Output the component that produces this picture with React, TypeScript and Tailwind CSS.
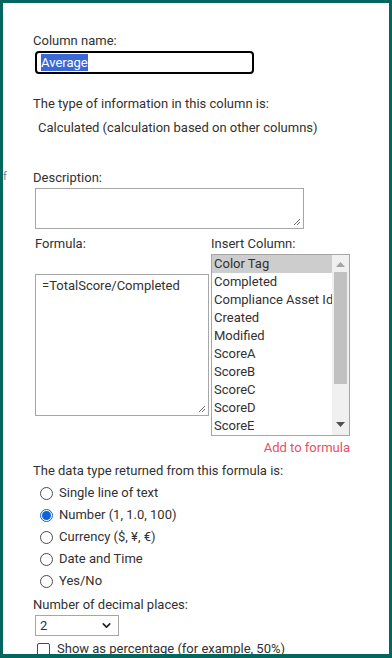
import { ChevronDown } from "lucide-react";

const columns = [
  "Color Tag",
  "Completed",
  "Compliance Asset Id",
  "Created",
  "Modified",
  "ScoreA",
  "ScoreB",
  "ScoreC",
  "ScoreD",
  "ScoreE",
];

const types = [
  { label: "Single line of text", checked: false },
  { label: "Number (1, 1.0, 100)", checked: true },
  { label: "Currency ($, ¥, €)", checked: false },
  { label: "Date and Time", checked: false },
  { label: "Yes/No", checked: false },
];

const Radio = ({ checked }: { checked: boolean }) =>
  checked ? (
    <span className="w-[13px] h-[13px] rounded-full border border-[#0a64d8] flex items-center justify-center">
      <span className="w-[9px] h-[9px] rounded-full bg-[#0a64d8]" />
    </span>
  ) : (
    <span className="w-[13px] h-[13px] rounded-full border border-[#4a4a4a] bg-white" />
  );

const Resize = () => (
  <svg className="absolute right-[2px] bottom-[2px]" width="8" height="8" viewBox="0 0 8 8">
    <path d="M7 1 L1 7 M7 4 L4 7" stroke="#6b6b6b" strokeWidth="1" />
  </svg>
);

export default function App() {
  return (
    <div
      className="w-[392px] h-[658px] overflow-hidden bg-white border-[#03665f] border-t-[3px] border-l-[3px] border-r-[3px] border-b-[4px] text-[13px] text-[#323130] relative"
      style={{ fontFamily: 'Roboto, "Noto Sans", sans-serif' }}
    >
      <span className="absolute left-[0px] top-[166px] text-[11px] text-[#6a7fa0]">f</span>
      <div className="pl-[30px] pt-[29px]">
        <div className="leading-[18px] h-[18px]">Column name:</div>
        <div className="mt-[1px] ml-[2px] w-[219px] h-[23px] border-2 border-black rounded-[4px] flex items-center px-[4px]">
          <span className="bg-[#3b68d7] text-white leading-[17px]">Average</span>
        </div>
        <div className="mt-[21px] leading-[18px] h-[18px]">The type of information in this column is:</div>
        <div className="mt-[6px] ml-[5px] leading-[18px] h-[18px]">Calculated (calculation based on other columns)</div>
        <div className="mt-[32px] leading-[18px] h-[18px]">Description:</div>
        <div className="mt-[1px] ml-[2px] w-[269px] h-[41px] border border-[#a6a6a6] relative">
          <Resize />
        </div>
        <div className="flex mt-[6px] ml-[2px]">
          <div className="w-[176px]">
            <div className="leading-[18px] h-[18px]">Formula:</div>
            <div className="mt-[21px] w-[174px] h-[142px] border border-[#a6a6a6] relative px-[6px] py-[2px] leading-[18px]">
              =TotalScore/Completed
              <Resize />
            </div>
          </div>
          <div className="w-[139px]">
            <div className="leading-[18px] h-[18px]">Insert Column:</div>
            <div className="mt-[1px] w-[139px] h-[182px] border border-[#a6a6a6] flex">
              <div className="flex-1 min-w-0 overflow-hidden">
                {columns.map((c, i) => (
                  <div
                    key={c}
                    className={`h-[18px] leading-[18px] pl-[2px] whitespace-nowrap ${i === 0 ? "bg-[#cdcdcd]" : ""}`}
                  >
                    {c}
                  </div>
                ))}
              </div>
              <div className="w-[17px] bg-[#f0f0f0] flex flex-col items-center">
                <svg className="mt-[7px]" width="9" height="5" viewBox="0 0 9 5">
                  <path d="M0 5 L4.5 0 L9 5 Z" fill="#a3a3a3" />
                </svg>
                <div className="mt-[5px] w-[13px] h-[112px] bg-[#c1c1c1]" />
                <div className="flex-1" />
                <svg className="mb-[8px]" width="9" height="5" viewBox="0 0 9 5">
                  <path d="M0 0 L9 0 L4.5 5 Z" fill="#505050" />
                </svg>
              </div>
            </div>
          </div>
        </div>
        <div className="w-[317px] text-right text-[#ea4e63] leading-[18px] h-[18px] mt-[3px]">Add to formula</div>
        <div className="mt-[5px] leading-[18px] h-[18px]">The data type returned from this formula is:</div>
        <div className="mt-[2px] ml-[7px]">
          {types.map((t) => (
            <div key={t.label} className="h-[22px] flex items-center gap-[6px]">
              <Radio checked={t.checked} />
              <span className="leading-[18px]">{t.label}</span>
            </div>
          ))}
        </div>
        <div className="mt-[4px] leading-[18px] h-[18px]">Number of decimal places:</div>
        <div className="mt-[1px] ml-[2px] w-[84px] h-[21px] border border-[#a6a6a6] flex items-center justify-between pl-[4px] pr-[5px]">
          <span className="leading-[18px]">2</span>
          <ChevronDown size={13} strokeWidth={3} color="#222" />
        </div>
        <div className="mt-[6px] ml-[4px] flex items-center gap-[7px] h-[14px]">
          <span className="w-[13px] h-[13px] border border-[#4a4a4a] rounded-[2px]" />
          <span className="leading-[18px]">Show as percentage (for example, 50%)</span>
        </div>
      </div>
    </div>
  );
}
